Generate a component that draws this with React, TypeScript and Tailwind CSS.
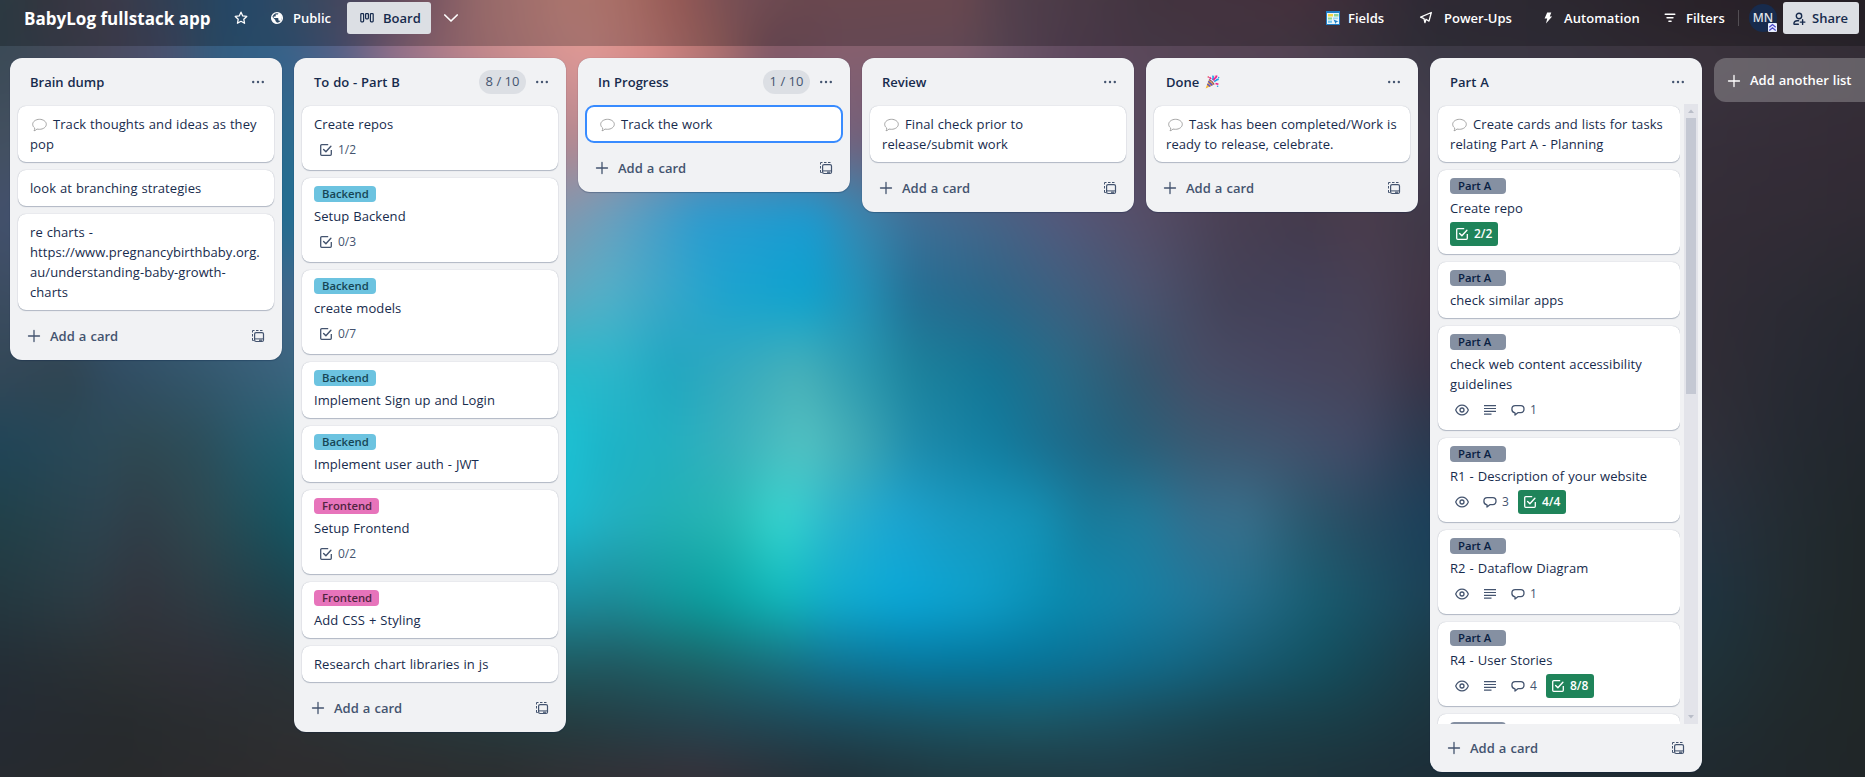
import React from "react";
import clsx from "clsx";

/* ---------- Board wallpaper ---------- */

type Stop = [number, string];
type Row = [number, Stop[]];

const WALLPAPER: Row[] = [
  [0, [[0, "#3a4c57"], [50, "#454754"], [110, "#504c5f"], [190, "#3a5876"], [240, "#305f8a"], [300, "#46607f"], [380, "#6d5c78"], [430, "#9e7080"], [480, "#c58b8b"], [570, "#e29a91"], [620, "#dd9186"], [680, "#c3746f"], [730, "#9e6970"], [800, "#8b5f69"], [960, "#8b5f69"], [1010, "#6c5464"], [1150, "#574554"], [1300, "#5a4050"], [1430, "#3d3745"], [1560, "#3b3540"], [1700, "#362c36"], [1865, "#2f2830"]]],
  [54, [[0, "#3a4a56"], [100, "#4a4a5c"], [170, "#4c5270"], [215, "#345e80"], [280, "#35628a"], [340, "#566088"], [390, "#94708a"], [460, "#bc828a"], [520, "#d0908f"], [590, "#e09a97"], [650, "#d88a86"], [720, "#b0706c"], [770, "#7e5664"], [840, "#865f6e"], [960, "#80606f"], [1000, "#70586a"], [1070, "#604a60"], [1150, "#5a485a"], [1280, "#554555"], [1340, "#4a4250"], [1430, "#3c3a46"], [1560, "#3c3844"], [1700, "#3c343e"], [1865, "#352f38"]]],
  [140, [[0, "#43505f"], [150, "#485272"], [288, "#286c90"], [400, "#6a7890"], [572, "#b8888f"], [700, "#8a7a98"], [856, "#74607a"], [1000, "#62506c"], [1140, "#584a5e"], [1300, "#4c4050"], [1425, "#443e4e"], [1706, "#362f3a"], [1790, "#352d38"], [1865, "#342c36"]]],
  [215, [[0, "#44506c"], [288, "#206e92"], [400, "#407898"], [560, "#8497ae"], [615, "#68a0c0"], [700, "#2c9cd0"], [810, "#1b9bd2"], [860, "#3a86b0"], [915, "#3f7098"], [993, "#486488"], [1060, "#54597c"], [1143, "#564e68"], [1226, "#4a4054"], [1304, "#443a4c"], [1365, "#4b3c4c"], [1425, "#3f3948"], [1706, "#342d37"], [1790, "#322c36"], [1865, "#302b34"]]],
  [295, [[0, "#3c4c60"], [288, "#42668a"], [560, "#60a8c0"], [604, "#54b0c8"], [654, "#3fa8c8"], [727, "#1ca4cf"], [804, "#0ca3cf"], [860, "#2292b8"], [915, "#246f94"], [993, "#2c6688"], [1060, "#3d6080"], [1143, "#4c5470"], [1226, "#444258"], [1304, "#434058"], [1365, "#474054"], [1425, "#423646"], [1706, "#312c36"], [1790, "#2c2b34"], [1865, "#282930"]]],
  [370, [[0, "#344858"], [70, "#304450"], [110, "#304c62"], [200, "#34586e"], [290, "#3c647e"], [560, "#28bccb"], [615, "#2bb6ca"], [671, "#20a6c0"], [727, "#34a9be"], [799, "#49b0b8"], [860, "#2c9ab0"], [915, "#1c829c"], [993, "#147494"], [1060, "#286a86"], [1143, "#36566e"], [1198, "#474d66"], [1281, "#474660"], [1365, "#474459"], [1425, "#3a3447"], [1706, "#302d36"], [1790, "#282a33"], [1865, "#24272f"]]],
  [445, [[0, "#204558"], [100, "#2c4a58"], [140, "#2f4952"], [200, "#2c4e5a"], [250, "#265a6c"], [290, "#225f70"], [560, "#1cc4d6"], [604, "#1cb4c8"], [671, "#24b0c0"], [727, "#38b0bc"], [804, "#54c2c2"], [860, "#40a8b4"], [915, "#1f8cac"], [993, "#127ea0"], [1060, "#1c6c8c"], [1120, "#24617c"], [1198, "#3a5a72"], [1281, "#42546e"], [1354, "#424a66"], [1425, "#2a3a50"], [1706, "#2f303a"], [1790, "#252a32"], [1865, "#22272d"]]],
  [520, [[0, "#214149"], [100, "#2d4450"], [140, "#303e48"], [200, "#2e4850"], [290, "#155562"], [560, "#1cbcd2"], [615, "#24b0c0"], [671, "#22b0b4"], [727, "#28b8b4"], [782, "#36d6d0"], [837, "#2cb4cc"], [893, "#1ca6d2"], [948, "#1a9cc4"], [1032, "#1494b8"], [1087, "#187c9c"], [1143, "#207c9c"], [1198, "#346f8e"], [1243, "#38708c"], [1309, "#2a586e"], [1365, "#284a60"], [1425, "#1c405a"], [1706, "#28323f"], [1790, "#232c32"], [1865, "#20272a"]]],
  [600, [[0, "#243840"], [80, "#2c3c44"], [140, "#32353e"], [200, "#2e3b43"], [290, "#1d404a"], [560, "#1c8ea0"], [615, "#1c8c98"], [710, "#0aa0a0"], [782, "#10b8bc"], [837, "#10aed0"], [904, "#0aa8d8"], [982, "#0ea0ca"], [1060, "#0a8cb0"], [1115, "#1285aa"], [1198, "#20789a"], [1254, "#226c88"], [1320, "#185c70"], [1425, "#1c4256"], [1706, "#1f3440"], [1790, "#222c31"], [1865, "#202729"]]],
  [665, [[0, "#242e36"], [120, "#2c3134"], [200, "#303038"], [290, "#293338"], [560, "#1f5a60"], [615, "#205860"], [699, "#1c6468"], [782, "#187080"], [837, "#107494"], [920, "#0678a0"], [1004, "#04759c"], [1087, "#0c7094"], [1170, "#126886"], [1254, "#165a70"], [1320, "#135060"], [1425, "#1c3a46"], [1706, "#1f3239"], [1790, "#202b2f"], [1865, "#202728"]]],
  [720, [[0, "#252b33"], [120, "#272b2e"], [290, "#2d3033"], [560, "#243c40"], [699, "#244450"], [837, "#1c4c5c"], [948, "#1a5464"], [1032, "#1c5866"], [1115, "#1c5060"], [1226, "#1a4450"], [1337, "#1a3e48"], [1425, "#1c343e"], [1706, "#202e34"], [1790, "#20292c"], [1865, "#202728"]]],
  [777, [[0, "#262a30"], [120, "#282a2c"], [290, "#2e2c2e"], [500, "#2c2e30"], [560, "#303034"], [699, "#363038"], [837, "#223038"], [948, "#203840"], [1115, "#203a44"], [1281, "#1f343c"], [1425, "#1d2e38"], [1706, "#20292f"], [1865, "#202628"]]],
];

function Wallpaper() {
  return (
    <svg className="absolute inset-0 h-full w-full" viewBox="0 0 1865 777" preserveAspectRatio="none" aria-hidden="true">
      <defs>
        <filter id="soften" filterUnits="userSpaceOnUse" x="-80" y="-80" width="2025" height="937" colorInterpolationFilters="sRGB">
          <feGaussianBlur stdDeviation="14 18" />
        </filter>
        {WALLPAPER.map(([y, stops], i) => (
          <React.Fragment key={y}>
            <linearGradient id={`row${i}`} gradientUnits="userSpaceOnUse" x1="0" y1="0" x2="1865" y2="0">
              {stops.map(([x, c]) => (
                <stop key={x} offset={x / 1865} stopColor={c} />
              ))}
            </linearGradient>
            {i > 0 && (
              <>
                <linearGradient id={`fade${i}`} gradientUnits="userSpaceOnUse" x1="0" y1={WALLPAPER[i - 1][0]} x2="0" y2={y}>
                  <stop offset="0" stopColor="#000" />
                  <stop offset="1" stopColor="#fff" />
                </linearGradient>
                <mask id={`mask${i}`} maskUnits="userSpaceOnUse" x="-80" y="-80" width="2025" height="937">
                  <rect x="-80" y="-80" width="2025" height="937" fill={`url(#fade${i})`} />
                </mask>
              </>
            )}
          </React.Fragment>
        ))}
      </defs>
      <g filter="url(#soften)">
        {WALLPAPER.map(([y], i) => (
          <rect key={y} x="-80" y="-80" width="2025" height="937" fill={`url(#row${i})`} mask={i > 0 ? `url(#mask${i})` : undefined} />
        ))}
      </g>
    </svg>
  );
}

/* ---------- Icons ---------- */

type IconProps = { className?: string };

const Svg = ({ className, children, box = 16 }: IconProps & { children: React.ReactNode; box?: number }) => (
  <svg className={clsx("shrink-0", className)} viewBox={`0 0 ${box} ${box}`} fill="none" stroke="currentColor" aria-hidden="true">
    {children}
  </svg>
);

const StarIcon = () => (
  <Svg className="h-4 w-4">
    <path d="M8 2.2l1.75 3.75 4 .5-2.95 2.8.75 4.05L8 11.3l-3.55 2 .75-4.05-2.95-2.8 4-.5z" strokeWidth="1.3" strokeLinejoin="round" />
  </Svg>
);

const GlobeIcon = () => (
  <Svg className="h-4 w-4">
    <circle cx="8" cy="8" r="5.4" strokeWidth="1.3" />
    <path d="M2.8 6.6l3.6 3.5v1l1.3 1.1v1.5C4.500 13.600 2.300 10.500 2.800 6.600z M9.400 2.600v.7c0 .8-.6 1.300-1.300 1.300H6.700v1.300c0 .4-.3.7-.7.7H4.700v1.300h4c.4 0 .7.3.7.7v2h.6c.6 0 1.100.4 1.300.9 2.500-2.600 2.500-7.300-1.900-8.900z" fill="currentColor" stroke="none" />
  </Svg>
);

const BoardIcon = () => (
  <Svg className="h-4 w-4">
    <g strokeWidth="1.2">
      <rect x="1.800" y="2.600" width="2.800" height="8.200" rx=".7" />
      <rect x="6.600" y="2.600" width="2.800" height="5.200" rx=".7" />
      <rect x="11.400" y="2.600" width="2.800" height="8.200" rx=".7" />
    </g>
  </Svg>
);

const ChevronIcon = () => (
  <Svg className="h-4 w-4">
    <path d="M1.800 5l6.200 6 6.200-6" strokeWidth="1.700" strokeLinecap="round" strokeLinejoin="round" />
  </Svg>
);

const FieldsIcon = () => (
  <Svg className="h-[14px] w-[14px]" box={14}>
    <rect width="14" height="14" fill="#1f7fc9" stroke="none" />
    <rect x="1" y="2" width="12" height="11" fill="#e9f6fb" stroke="none" />
    <rect x="2" y="3" width="5" height="2.500" fill="#f6d743" stroke="none" />
    <rect x="8" y="3" width="4.500" height="2.500" fill="#8fd694" stroke="none" />
    <rect x="2" y="6.500" width="4" height="2" fill="#8fd694" stroke="none" />
    <rect x="2" y="9.600" width="4" height="2.200" fill="#72c6ef" stroke="none" />
    <rect x="7" y="6.500" width="5" height="1.600" fill="#9fd8f4" stroke="none" />
    <path d="M7.500 8.500l5 2-2 .6-.8 2z" fill="#1f7fc9" stroke="none" />
  </Svg>
);

const RocketIcon = () => (
  <Svg className="h-4 w-4">
    <path d="M13.300 2.500L11 11.200 8 9.300 6.900 12.700 6 8.600 2.600 7.200z" strokeWidth="1.300" strokeLinejoin="round" strokeLinecap="round" />
  </Svg>
);

const BoltIcon = () => (
  <Svg className="h-4 w-4">
    <path d="M7.200 2.600h4.100L9.800 6.400h2.300L6 13.600l1.200-5H4.600z" fill="currentColor" stroke="none" />
  </Svg>
);

const FilterIcon = () => (
  <Svg className="h-4 w-4">
    <path d="M3.200 4.300h9.600M5 7.800h6M6.900 11.300h2.200" strokeWidth="1.400" strokeLinecap="round" />
  </Svg>
);

const ShareIcon = () => (
  <Svg className="h-4 w-4">
    <circle cx="8" cy="5" r="2.700" strokeWidth="1.400" />
    <path d="M7.600 9.700H6.200a3.300 3.300 0 0 0-3.300 2.500c-.2.600.2 1.100.8 1.100h3.700M11.600 8.800v4.600M9.300 11.100h4.600" strokeWidth="1.400" strokeLinecap="round" />
  </Svg>
);

const DotsIcon = () => (
  <Svg className="h-4 w-4">
    <g fill="currentColor" stroke="none">
      <circle cx="3.200" cy="8" r="1.200" />
      <circle cx="8" cy="8" r="1.200" />
      <circle cx="12.800" cy="8" r="1.200" />
    </g>
  </Svg>
);

const PlusIcon = ({ className }: IconProps) => (
  <Svg className={clsx("h-4 w-4", className)}>
    <path d="M8 2.500v11M2.500 8h11" strokeWidth="1.300" strokeLinecap="round" />
  </Svg>
);

const TemplateIcon = () => (
  <Svg className="h-4 w-4">
    <path d="M2.500 4.500v-2h2M6 2.500h2.500M10 2.500h2.500M2.500 6v2.500M2.500 10v2.500h1.300" strokeWidth="1" />
    <rect x="4.600" y="4.600" width="8.900" height="8.900" rx="1.500" strokeWidth="1.200" />
    <path d="M4.600 10.900h8.900" strokeWidth="1" />
    <path d="M9 12.200h3" strokeWidth="1.200" />
  </Svg>
);

const CheckIcon = () => (
  <Svg className="h-4 w-4">
    <path d="M10.200 2.700H3.700a1 1 0 0 0-1 1v8.600a1 1 0 0 0 1 1h8.600a1 1 0 0 0 1-1V8" strokeWidth="1.300" />
    <path d="M5.600 7.400l2.300 2.300 5-5.400" strokeWidth="1.400" strokeLinecap="round" strokeLinejoin="round" />
  </Svg>
);

const EyeIcon = () => (
  <Svg className="h-4 w-4">
    <path d="M8 3.200c2.700 0 4.900 1.700 6.100 4.300.1.300.1.700 0 1C12.900 11.100 10.700 12.800 8 12.800S3.100 11.100 1.900 8.500a1.200 1.200 0 0 1 0-1C3.100 4.900 5.300 3.200 8 3.200z" strokeWidth="1.300" />
    <circle cx="8" cy="8" r="2" strokeWidth="1.300" />
  </Svg>
);

const LinesIcon = () => (
  <Svg className="h-4 w-4">
    <path d="M2 3.700h12M2 6.500h12M2 9.300h12M2 12.100h7.500" strokeWidth="1.200" />
  </Svg>
);

const CommentIcon = () => (
  <Svg className="h-4 w-4">
    <path d="M5 13V10.800C3.100 10.600 1.900 9.300 1.900 7.200 1.900 5 3.300 3.700 5.200 3.700h5.600c1.900 0 3.200 1.300 3.200 3.400 0 2.200-1.300 3.500-3.200 3.500H8.200z" strokeWidth="1.300" strokeLinejoin="round" />
  </Svg>
);

const SpeechBubble = () => (
  <svg className="mr-[6px] ml-[2px] inline-block h-[14px] w-[15px] -translate-y-px align-middle" viewBox="0 0 15 14" fill="none" aria-hidden="true">
    <path d="M7.500 1.300c3.700 0 6.800 2.200 6.800 5s-3.100 5-6.800 5c-1 0-1.800-.1-2.600-.3-.6.900-1.500 1.700-2.900 1.800.6-.8.800-1.700.7-2.800C1.400 9 .7 7.700.7 6.300c0-2.800 3.100-5 6.800-5z" fill="#fff" stroke="#9b9b9b" strokeWidth=".9" />
  </svg>
);

const PartyPopper = () => (
  <svg className="h-[14px] w-[15px] shrink-0" viewBox="0 0 15 14" fill="none" aria-hidden="true">
    <path d="M4 4.500L.6 13.600l8.600-4z" fill="#f2b632" />
    <path d="M3.300 6.300L7.400 10.400M2.300 9l3 2.500" stroke="#5a4fcf" strokeWidth="1.500" />
    <path d="M4 4.500c1.500.6 4.200 3 5.200 5.100" stroke="#8a4b6a" strokeWidth="1.200" />
    <path d="M7.500.8c1.500.8.500 2.300.2 4.200M13.800 4.500c-1.500-.5-2.500.8-4.600 2.100" stroke="#1fa2e8" strokeWidth="1.700" />
    <path d="M12.300 1.200c-1.400 0-1 1.600-2.300 1.900-1 .4-.9 1.500-1.600 2.400M4.500 2.200l1.600 1.800M10.500 8.500l2.900.8" stroke="#ec1f8f" strokeWidth="1.700" />
    <circle cx="3.300" cy="2" r=".8" fill="#e8384f" />
    <circle cx="13.700" cy="2.500" r=".7" fill="#1fa2e8" />
    <circle cx="12.600" cy="11.300" r=".8" fill="#1fa2e8" />
    <circle cx="10.200" cy="1" r=".6" fill="#e8384f" />
  </svg>
);

/* ---------- Data ---------- */

type Label = "Backend" | "Frontend" | "Part A";

type CardData = {
  title?: React.ReactNode;
  bubble?: boolean;
  label?: Label;
  watch?: boolean;
  description?: boolean;
  comments?: number;
  checklist?: string;
  done?: boolean;
  selected?: boolean;
};

type ListData = {
  name: string;
  party?: boolean;
  limit?: string;
  scroll?: boolean;
  cards: CardData[];
};

const LISTS: ListData[] = [
  {
    name: "Brain dump",
    cards: [
      { bubble: true, title: <>Track thoughts and ideas as they<br />pop</> },
      { title: "look at branching strategies" },
      { title: <>re charts -<br />https://www.pregnancybirthbaby.org.<br />au/understanding-baby-growth-<br />charts</> },
    ],
  },
  {
    name: "To do - Part B",
    limit: "8 / 10",
    cards: [
      { title: "Create repos", checklist: "1/2" },
      { label: "Backend", title: "Setup Backend", checklist: "0/3" },
      { label: "Backend", title: "create models", checklist: "0/7" },
      { label: "Backend", title: "Implement Sign up and Login" },
      { label: "Backend", title: "Implement user auth - JWT" },
      { label: "Frontend", title: "Setup Frontend", checklist: "0/2" },
      { label: "Frontend", title: "Add CSS + Styling" },
      { title: "Research chart libraries in js" },
    ],
  },
  {
    name: "In Progress",
    limit: "1 / 10",
    cards: [{ bubble: true, title: "Track the work", selected: true }],
  },
  {
    name: "Review",
    cards: [{ bubble: true, title: <>Final check prior to<br />release/submit work</> }],
  },
  {
    name: "Done",
    party: true,
    cards: [{ bubble: true, title: <>Task has been completed/Work is<br />ready to release, celebrate.</> }],
  },
  {
    name: "Part A",
    scroll: true,
    cards: [
      { bubble: true, title: <>Create cards and lists for tasks<br />relating Part A - Planning</> },
      { label: "Part A", title: "Create repo", checklist: "2/2", done: true },
      { label: "Part A", title: "check similar apps" },
      { label: "Part A", title: <>check web content accessibility<br />guidelines</>, watch: true, description: true, comments: 1 },
      { label: "Part A", title: "R1 - Description of your website", watch: true, comments: 3, checklist: "4/4", done: true },
      { label: "Part A", title: "R2 - Dataflow Diagram", watch: true, description: true, comments: 1 },
      { label: "Part A", title: "R4 - User Stories", watch: true, description: true, comments: 4, checklist: "8/8", done: true },
      { label: "Part A" },
    ],
  },
];

const LABEL_STYLES: Record<Label, string> = {
  Backend: "w-[62px] bg-[#6cc3e0] text-[#164555]",
  Frontend: "w-[65px] bg-[#e774bb] text-[#50253f]",
  "Part A": "w-14 bg-[#8590a2] text-[#091e42]",
};

/* ---------- Lists and cards ---------- */

function Badge({ children, className }: { children: React.ReactNode; className?: string }) {
  return <div className={clsx("flex h-6 items-center gap-1 rounded-[3px] px-1 text-[12px] leading-5", className)}>{children}</div>;
}

function Card({ card }: { card: CardData }) {
  const hasBadges = card.watch || card.description || card.comments || card.checklist;
  return (
    <div
      className={clsx(
        "shrink-0 rounded-lg bg-white px-3 py-2",
        card.selected ? "outline-2 -outline-offset-1 outline-[#388bff]" : "shadow-[0_1px_1px_#091e4240,0_0_1px_#091e424f]",
      )}
    >
      {card.label && (
        <div className={clsx("mb-1 h-4 rounded pl-2 text-[11.3px] leading-4 font-semibold whitespace-nowrap", LABEL_STYLES[card.label])}>
          {card.title && card.label}
        </div>
      )}
      <div className="min-h-5 text-[13px] leading-5 tracking-[0.07px] whitespace-nowrap text-[#172b4d] [word-spacing:0.5px]">
        {card.bubble && <SpeechBubble />}
        {card.title}
      </div>
      {hasBadges && (
        <div className="mt-1 flex gap-1 text-[#44546f]">
          {card.watch && <Badge><EyeIcon /></Badge>}
          {card.description && <Badge><LinesIcon /></Badge>}
          {card.comments && <Badge className="w-9"><CommentIcon />{card.comments}</Badge>}
          {card.checklist && (
            <Badge className={card.done ? "w-12 bg-[#1f845a] font-semibold text-white" : ""}><CheckIcon />{card.checklist}</Badge>
          )}
        </div>
      )}
    </div>
  );
}

function ScrollTrack() {
  return (
    <div className="flex w-[14px] shrink-0 flex-col items-center justify-between bg-[#e3e4ea]">
      <div className="flex flex-col items-center">
        <svg className="h-[14px] w-[14px]" viewBox="0 0 14 14" aria-hidden="true"><path d="M7 5.500L10 9H4z" fill="#b9bdc8" /></svg>
        <div className="h-[276px] w-[10px] bg-[#c4c8d3]" />
      </div>
      <svg className="h-[14px] w-[14px]" viewBox="0 0 14 14" aria-hidden="true"><path d="M7 8.500L4 5h6z" fill="#b9bdc8" /></svg>
    </div>
  );
}

function List({ list }: { list: ListData }) {
  return (
    <section className="flex max-h-[714px] w-[272px] shrink-0 flex-col rounded-xl bg-[#f1f2f4] shadow-[0_1px_1px_#091e4240,0_0_1px_#091e424f]">
      <header className="flex h-[46px] shrink-0 items-center pt-[2px] pr-2 pl-5">
        <h2 className="flex grow items-center gap-[6px] text-[13px] leading-5 font-semibold text-[#172b4d] [word-spacing:0.5px]">
          {list.name}
          {list.party && <PartyPopper />}
        </h2>
        {list.limit && (
          <span className="flex h-6 w-[47px] items-center justify-center rounded-full bg-[#dcdfe4] text-[13px] text-[#44546f]">{list.limit}</span>
        )}
        <span className="flex w-8 justify-center text-[#44546f]"><DotsIcon /></span>
      </header>
      <div className="flex min-h-0 pr-1 pl-2">
        <div className={clsx("flex min-h-0 grow flex-col gap-2 py-[2px]", list.scroll ? "mr-1 -ml-1 overflow-hidden pl-1" : "mr-1")}>
          {list.cards.map((card, i) => (
            <Card key={i} card={card} />
          ))}
        </div>
        {list.scroll && <ScrollTrack />}
      </div>
      <footer className="flex h-12 shrink-0 items-center justify-between px-4 text-[#44546f]">
        <span className="flex items-center gap-2 text-[13px] leading-5 font-semibold [word-spacing:0.7px]"><PlusIcon />Add a card</span>
        <TemplateIcon />
      </footer>
    </section>
  );
}

/* ---------- Header ---------- */

function BoardHeader() {
  return (
    <header className="flex h-[46px] shrink-0 items-start bg-black/24 pt-[2px] text-[13px] font-semibold text-white">
      <div className="flex h-8 items-center">
        <h1 className="ml-6 w-[186px] pt-[2px] text-[17px] font-bold tracking-[0.03px] whitespace-nowrap">BabyLog fullstack app</h1>
        <span className="ml-[23px]"><StarIcon /></span>
        <span className="ml-5"><GlobeIcon /></span>
        <span className="ml-2 w-[54px] pt-px">Public</span>
        <span className="flex h-8 w-[84px] items-center gap-2 rounded-[3px] bg-[#dcdfe4] pt-px pl-3 text-[#172b4d]"><BoardIcon />Board</span>
        <span className="ml-3"><ChevronIcon /></span>
      </div>
      <div className="ml-auto flex h-8 items-center pr-[6px]">
        <FieldsIcon />
        <span className="ml-2 w-[70px] pt-px">Fields</span>
        <RocketIcon />
        <span className="ml-[10px] w-[96px] pt-px">Power-Ups</span>
        <BoltIcon />
        <span className="ml-2 w-[98px] pt-px tracking-[0.1px]">Automation</span>
        <FilterIcon />
        <span className="ml-2 w-[52px] pt-px">Filters</span>
        <span className="h-4 w-px bg-white/20" />
        <span className="relative ml-[10px] flex h-7 w-7 items-center justify-center rounded-full bg-[#172b4d] text-[12px] font-semibold text-[#dfe1e6]">
          MN
          <svg className="absolute right-0 bottom-0 h-[9px] w-[9px]" viewBox="0 0 9 9" aria-hidden="true">
            <rect width="9" height="9" rx="1" fill="#e9f0ff" />
            <path d="M1.300 4.300L4.500 1.600l3.200 2.700M1.300 7.500l3.200-2.700 3.200 2.700" fill="none" stroke="#4c47c9" strokeWidth="1.300" />
          </svg>
        </span>
        <span className="ml-[6px] flex h-8 w-[76px] items-center gap-[5px] rounded-[3px] bg-[#dcdfe4] pt-px pl-2 text-[#172b4d]"><ShareIcon />Share</span>
      </div>
    </header>
  );
}

export default function App() {
  return (
    <div className="relative h-[777px] w-full overflow-hidden bg-[#262a30] font-['Open_Sans','Noto_Sans',sans-serif]">
      <Wallpaper />
      <div className="relative flex h-full flex-col">
        <BoardHeader />
        <main className="flex grow items-start gap-3 pt-3 pl-[10px]">
          {LISTS.map((list) => (
            <List key={list.name} list={list} />
          ))}
          <button className="flex h-11 w-[272px] shrink-0 items-center gap-2 rounded-xl bg-white/24 pt-px pl-3 text-[13px] font-semibold text-white [word-spacing:0.5px]">
            <PlusIcon />
            Add another list
          </button>
        </main>
      </div>
    </div>
  );
}
